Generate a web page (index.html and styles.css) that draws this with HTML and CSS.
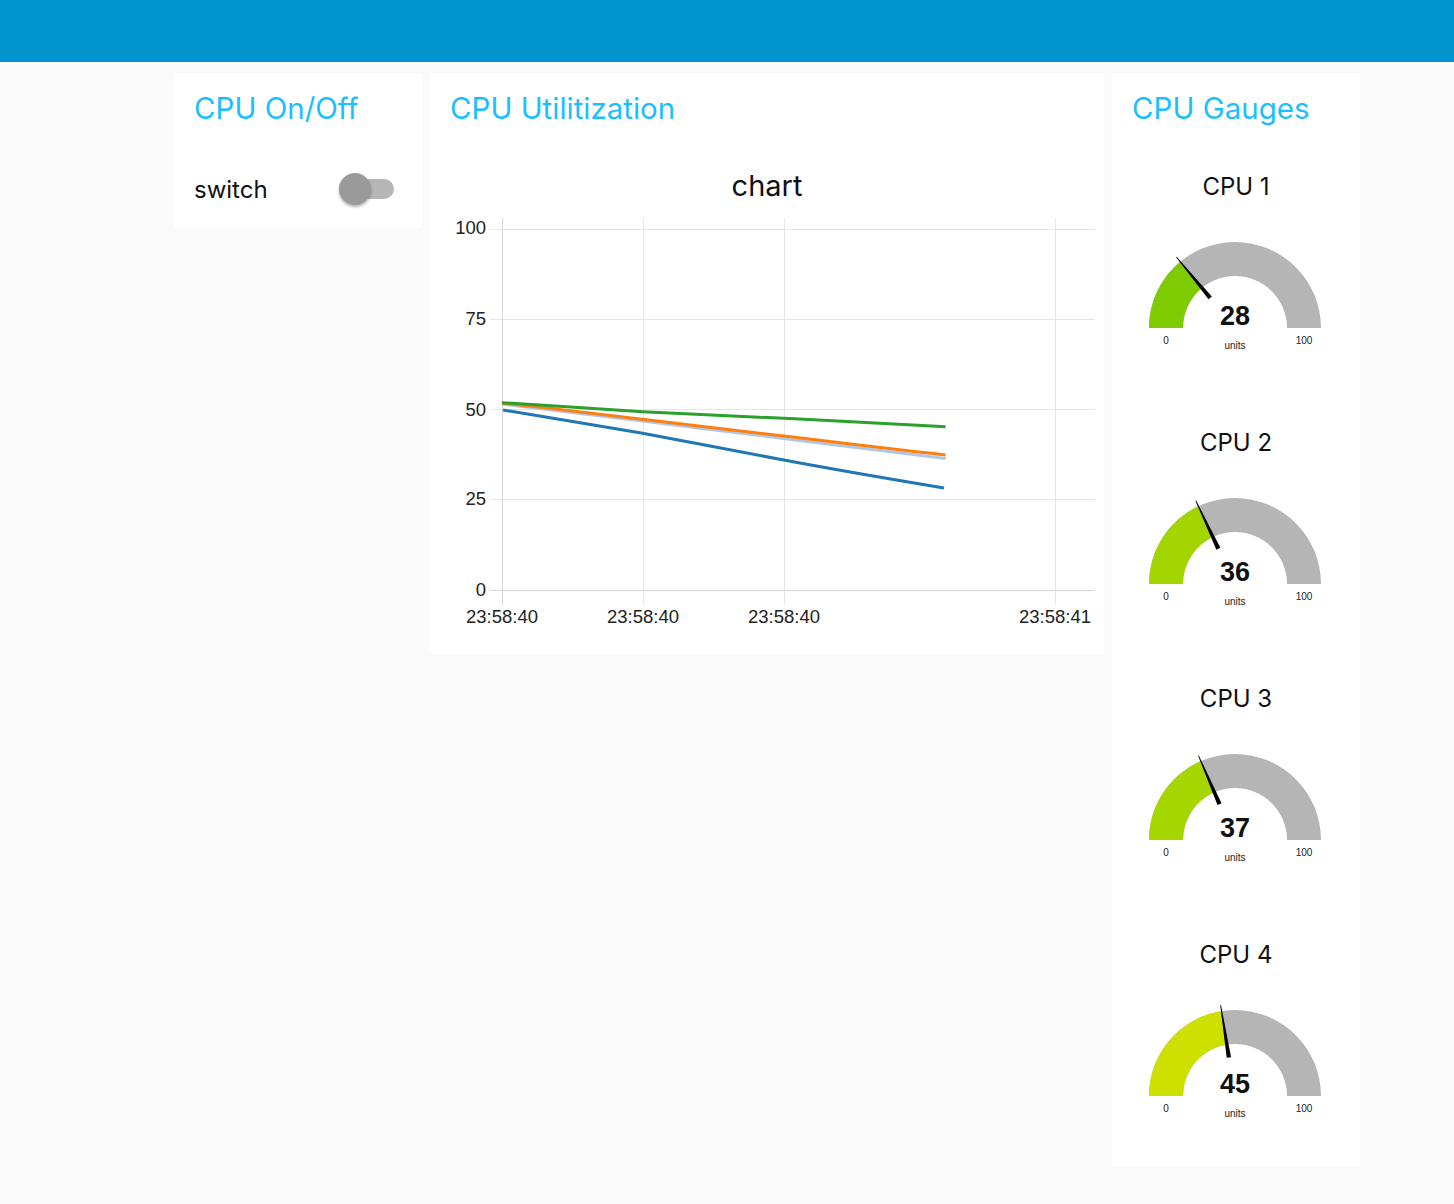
FILE: index.html
```html
<!DOCTYPE html>
<html lang="en">
<head>
<meta charset="utf-8">
<title>Dashboard</title>
<link rel="stylesheet" href="styles.css">
</head>
<body>
<div class="topbar"></div>
<div class="layout">
  <section class="card card-switch">
    <h2 class="card-title">CPU On/Off</h2>
    <div class="switch-row">
      <span class="switch-label">switch</span>
      <span class="toggle"><span class="toggle-track"></span><span class="toggle-thumb"></span></span>
    </div>
  </section>

  <section class="card card-chart">
    <h2 class="card-title">CPU Utilitization</h2>
    <svg class="chart" width="674" height="504" viewBox="0 0 674 504">
      <text class="chart-title" x="337" y="46" text-anchor="middle">chart</text>
      <g class="grid">
        <line x1="60" y1="79.5" x2="665" y2="79.5"/>
        <line x1="60" y1="169.5" x2="665" y2="169.5"/>
        <line x1="60" y1="259.5" x2="665" y2="259.5"/>
        <line x1="60" y1="349.5" x2="665" y2="349.5"/>
        <line x1="213.5" y1="68" x2="213.5" y2="455"/>
        <line x1="354.5" y1="68" x2="354.5" y2="455"/>
        <line x1="625.5" y1="68" x2="625.5" y2="455"/>
      </g>
      <g class="axis">
        <line x1="60" y1="440.5" x2="665" y2="440.5"/>
        <line x1="72.5" y1="68" x2="72.5" y2="455"/>
      </g>
      <g class="ylabels">
        <text x="56" y="84">100</text>
        <text x="56" y="174.5">75</text>
        <text x="56" y="265.5">50</text>
        <text x="56" y="355">25</text>
        <text x="56" y="445.5">0</text>
      </g>
      <g class="xlabels">
        <text x="72" y="473">23:58:40</text>
        <text x="213" y="473">23:58:40</text>
        <text x="354" y="473">23:58:40</text>
        <text x="625" y="473">23:58:41</text>
      </g>
      <g class="series">
        <path stroke="#1f77b4" d="M73 260 C120 268 165 275 212.6 283.3 C260 292 306 301 353.7 310 C407 320 460 329 514 338"/>
        <path stroke="#aec7e8" d="M72 254 C119 260 165 265 212.6 271 C260 277 306 282.5 353.7 288.5 C407 295 460 302 515.6 308.5"/>
        <path stroke="#ff7f0e" d="M72 253 C119 258 165 263.5 212.6 269.3 C260 275 306 280.5 353.7 286 C407 292.5 460 299 515.6 305"/>
        <path stroke="#2ca02c" d="M72 252.7 C119 255.5 165 258.8 212.6 261.7 C260 264 306 266 353.7 268.3 C407 271 460 274 515.6 276.7"/>
      </g>
    </svg>
  </section>

  <section class="card card-gauges">
    <h2 class="card-title">CPU Gauges</h2>
    <div class="gauges">
      <div class="gauge">
        <div class="gauge-title">CPU 1</div>
        <svg width="248" height="205" viewBox="0 0 248 205">
          <path class="g-bg" d="M37 127 A86 86 0 0 1 209 127 L175 127 A52 52 0 0 0 71 127 Z"/>
          <path fill="#7dcb00" d="M37 127 A86 86 0 0 1 68.2 60.7 L89.9 86.9 A52 52 0 0 0 71 127 Z"/>
          <polygon class="g-needle" points="31,126.6 31,127.4 84,129.2 84,124.8" transform="rotate(50.4 123 127)"/>
          <text class="g-value" x="123" y="124">28</text>
          <text class="g-small" x="123" y="148">units</text>
          <text class="g-small" x="54" y="142.5">0</text>
          <text class="g-small" x="192" y="142.5">100</text>
        </svg>
      </div>
      <div class="gauge">
        <div class="gauge-title">CPU 2</div>
        <svg width="248" height="205" viewBox="0 0 248 205">
          <path class="g-bg" d="M37 127 A86 86 0 0 1 209 127 L175 127 A52 52 0 0 0 71 127 Z"/>
          <path fill="#a2d400" d="M37 127 A86 86 0 0 1 86.4 49.2 L100.9 80 A52 52 0 0 0 71 127 Z"/>
          <polygon class="g-needle" points="31,126.6 31,127.4 84,129.2 84,124.8" transform="rotate(64.8 123 127)"/>
          <text class="g-value" x="123" y="124">36</text>
          <text class="g-small" x="123" y="148">units</text>
          <text class="g-small" x="54" y="142.5">0</text>
          <text class="g-small" x="192" y="142.5">100</text>
        </svg>
      </div>
      <div class="gauge">
        <div class="gauge-title">CPU 3</div>
        <svg width="248" height="205" viewBox="0 0 248 205">
          <path class="g-bg" d="M37 127 A86 86 0 0 1 209 127 L175 127 A52 52 0 0 0 71 127 Z"/>
          <path fill="#a6d600" d="M37 127 A86 86 0 0 1 88.8 48.1 L102.4 79.3 A52 52 0 0 0 71 127 Z"/>
          <polygon class="g-needle" points="31,126.6 31,127.4 84,129.2 84,124.8" transform="rotate(66.6 123 127)"/>
          <text class="g-value" x="123" y="124">37</text>
          <text class="g-small" x="123" y="148">units</text>
          <text class="g-small" x="54" y="142.5">0</text>
          <text class="g-small" x="192" y="142.5">100</text>
        </svg>
      </div>
      <div class="gauge">
        <div class="gauge-title">CPU 4</div>
        <svg width="248" height="197" viewBox="0 0 248 197">
          <path class="g-bg" d="M37 127 A86 86 0 0 1 209 127 L175 127 A52 52 0 0 0 71 127 Z"/>
          <path fill="#cde000" d="M37 127 A86 86 0 0 1 109.5 42.1 L114.9 75.6 A52 52 0 0 0 71 127 Z"/>
          <polygon class="g-needle" points="31,126.6 31,127.4 84,129.2 84,124.8" transform="rotate(81 123 127)"/>
          <text class="g-value" x="123" y="124">45</text>
          <text class="g-small" x="123" y="148">units</text>
          <text class="g-small" x="54" y="142.5">0</text>
          <text class="g-small" x="192" y="142.5">100</text>
        </svg>
      </div>
    </div>
  </section>
</div>
</body>
</html>
```

FILE: styles.css
```css
* { box-sizing: border-box; }

body {
  margin: 0;
  background: #fafafa;
  font-family: Inter, "Liberation Sans", Arial, sans-serif;
  color: #111111;
}

.topbar {
  height: 62px;
  background: #0094ce;
}

.layout {
  display: flex;
  align-items: flex-start;
  gap: 8px;
  padding: 11px 0 0 174px;
}

.card {
  background: #ffffff;
}

.card-title {
  margin: 16px 20px 0;
  font-size: 29.5px;
  line-height: 38px;
  font-weight: 400;
  color: #1bbfff;
  white-space: nowrap;
}

/* switch card */
.card-switch {
  width: 248px;
  padding-bottom: 19px;
}

.switch-row {
  display: flex;
  align-items: center;
  justify-content: space-between;
  height: 40px;
  margin: 42px 27px 0 20px;
  font-size: 24px;
}

.toggle {
  position: relative;
  display: block;
  width: 56px;
  height: 32px;
}

.toggle-track {
  position: absolute;
  left: 2px;
  right: 1px;
  top: 6px;
  height: 20px;
  border-radius: 10px;
  background: #b6b6b6;
}

.toggle-thumb {
  position: absolute;
  left: 0;
  top: 0;
  width: 32px;
  height: 32px;
  border-radius: 50%;
  background: #9a9a9a;
  box-shadow: 0 2px 3px rgba(0, 0, 0, 0.3);
}

/* chart card */
.card-chart {
  width: 674px;
}

.chart {
  display: block;
  margin-top: 23px;
}

.chart-title {
  font-family: Inter, "Liberation Sans", sans-serif;
  font-size: 29px;
  fill: #111111;
}

.grid line {
  stroke: #e6e6e6;
  stroke-width: 1;
}

.axis line {
  stroke: #d6d6d6;
  stroke-width: 1;
}

.ylabels text,
.xlabels text {
  font-family: "Liberation Sans", Arial, sans-serif;
  font-size: 18.5px;
  fill: #222222;
}

.ylabels text { text-anchor: end; }
.xlabels text { text-anchor: middle; }

.series path {
  fill: none;
  stroke-width: 3;
  stroke-linecap: butt;
  stroke-linejoin: round;
}

/* gauges card */
.card-gauges {
  width: 248px;
}

.gauges {
  margin-top: 23px;
}

.gauge {
  height: 256px;
  display: flex;
  flex-direction: column;
  align-items: center;
}

.gauge:last-child {
  height: 248px;
}

.gauge-title {
  padding-top: 22px;
  font-size: 24px;
  line-height: 29px;
  color: #111111;
}

.gauge svg {
  display: block;
}

.g-bg { fill: #b5b5b5; }

.g-needle { fill: #000000; }

.g-value {
  font-family: "Liberation Sans", Arial, sans-serif;
  font-weight: 700;
  font-size: 27px;
  fill: #111111;
  text-anchor: middle;
}

.g-small {
  font-family: "Liberation Sans", Arial, sans-serif;
  font-size: 10px;
  fill: #222222;
  text-anchor: middle;
}
```
